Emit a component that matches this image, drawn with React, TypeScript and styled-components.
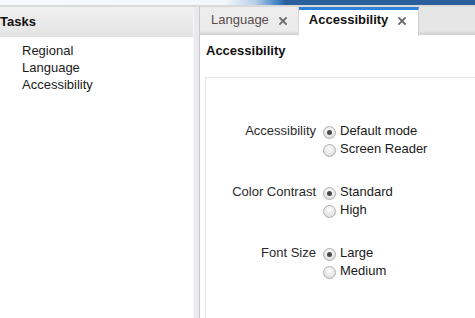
import React from "react";
import styled, { createGlobalStyle } from "styled-components";

const Global = createGlobalStyle`
  html, body { margin: 0; padding: 0; background: #fff; }
  body { font-family: "Liberation Sans", Arial, sans-serif; font-size: 13px; color: #222; }
  #root { width: 475px; height: 318px; overflow: hidden; }
`;

const Page = styled.div`
  width: 475px;
  height: 318px;
  display: flex;
  flex-direction: column;
  overflow: hidden;
`;

const TopStrip = styled.div`
  height: 5px;
  flex: none;
  background: linear-gradient(to right, #f7f9fc 0px, #f4f7fb 225px, #b9d0ea 255px, #3f7fc4 278px, #2a5f9c 285px, #2a5f9c 100%);
  border-bottom: 2px solid #d9d9d9;
`;

const Main = styled.div`
  flex: 1;
  display: flex;
  min-height: 0;
`;

const Sidebar = styled.div`
  width: 193px;
  flex: none;
  display: flex;
  flex-direction: column;
  background: #fff;
`;

const SidebarHeader = styled.div`
  height: 30px;
  display: flex;
  align-items: center;
  padding-bottom: 2px;
  box-sizing: border-box;
  font-weight: bold;
  color: #111;
  background: linear-gradient(to bottom, #f1f1f1, #e3e3e3);
`;

const TaskList = styled.ul`
  list-style: none;
  margin: 0;
  padding: 5px 0 0 22px;
`;

const TaskItem = styled.li`
  line-height: 17px;
  color: #1a1a1a;
`;

const Splitter = styled.div`
  flex: none;
  width: 7px;
  box-sizing: border-box;
  background: #e8eaef;
  border-left: 1px solid #f6f7f9;
  border-right: 1px solid #c9c9c9;
`;

const Workspace = styled.div`
  flex: 1;
  display: flex;
  flex-direction: column;
  min-width: 0;
`;

const TabBar = styled.div`
  height: 28px;
  flex: none;
  display: flex;
  background: linear-gradient(to bottom, #e6e6e6 0, #e6e6e6 24px, #dadada 26px, #cfcfcf 28px);
`;

const Tab = styled.div<{ $active?: boolean }>`
  display: flex;
  align-items: flex-start;
  gap: 10px;
  box-sizing: border-box;
  height: ${(p) => (p.$active ? "29px" : "28px")};
  font-weight: ${(p) => (p.$active ? "bold" : "normal")};
  color: ${(p) => (p.$active ? "#111" : "#5a4d4d")};
  background: ${(p) =>
    p.$active
      ? "#fff"
      : "linear-gradient(to bottom, #ededed 0, #ebebeb 24px, #dcdcdc 26px, #d0d0d0 28px)"};
  border-top: ${(p) => (p.$active ? "3px solid #2f80d8" : "none")};
  border-right: 1px solid ${(p) => (p.$active ? "#cfcfcf" : "#d6d6d6")};
  padding: ${(p) => (p.$active ? "2px 12px 0 10px" : "5px 11px 0 11px")};
  line-height: 16px;
  z-index: 1;
`;

const CloseIcon = styled.svg`
  width: 8px;
  height: 8px;
  margin-top: 5px;
  flex: none;
`;

const Content = styled.div`
  flex: 1;
  background: #fff;
  padding: 8px 0 0 5px;
  display: flex;
  flex-direction: column;
`;

const Heading = styled.div`
  font-weight: bold;
  color: #111;
  line-height: 16px;
  margin-left: 1px;
`;

const FormBox = styled.div`
  margin-top: 18px;
  border-top: 1px solid #e6e6e6;
  border-left: 1px solid #e6e6e6;
  flex: 1;
  padding-top: 44px;
  display: flex;
  flex-direction: column;
  gap: 25px;
`;

const Group = styled.div`
  display: grid;
  grid-template-columns: 110px auto;
  column-gap: 7px;
`;

const Label = styled.div`
  text-align: right;
  line-height: 18px;
  color: #2a2a2a;
`;

const Options = styled.div`
  display: flex;
  flex-direction: column;
`;

const Option = styled.label`
  display: flex;
  align-items: center;
  gap: 4px;
  line-height: 18px;
  color: #1a1a1a;
`;

const Radio = styled.span<{ $checked?: boolean }>`
  width: 13px;
  height: 13px;
  margin-top: 3px;
  box-sizing: border-box;
  border-radius: 50%;
  border: 1px solid #b0b0b0;
  background: radial-gradient(circle at 50% 35%, #fdfdfd 0%, #e6e6e6 60%, #d4d4d4 100%);
  display: flex;
  align-items: center;
  justify-content: center;
  flex: none;
  &::after {
    content: "";
    width: 5px;
    height: 5px;
    border-radius: 50%;
    background: ${(p) => (p.$checked ? "#4a4a4a" : "transparent")};
  }
`;

const X = () => (
  <CloseIcon viewBox="0 0 8 8">
    <path d="M1 1 L7 7 M7 1 L1 7" stroke="#6b6b6b" strokeWidth="1.8" strokeLinecap="square" />
  </CloseIcon>
);

const groups = [
  { label: "Accessibility", options: ["Default mode", "Screen Reader"] },
  { label: "Color Contrast", options: ["Standard", "High"] },
  { label: "Font Size", options: ["Large", "Medium"] },
];

export default function App() {
  return (
    <Page>
      <Global />
      <TopStrip />
      <Main>
        <Sidebar>
          <SidebarHeader>Tasks</SidebarHeader>
          <TaskList>
            <TaskItem>Regional</TaskItem>
            <TaskItem>Language</TaskItem>
            <TaskItem>Accessibility</TaskItem>
          </TaskList>
        </Sidebar>
        <Splitter />
        <Workspace>
          <TabBar>
            <Tab>
              Language
              <X />
            </Tab>
            <Tab $active>
              Accessibility
              <X />
            </Tab>
          </TabBar>
          <Content>
            <Heading>Accessibility</Heading>
            <FormBox>
              {groups.map((g) => (
                <Group key={g.label}>
                  <Label>{g.label}</Label>
                  <Options>
                    {g.options.map((o, i) => (
                      <Option key={o}>
                        <Radio $checked={i === 0} />
                        {o}
                      </Option>
                    ))}
                  </Options>
                </Group>
              ))}
            </FormBox>
          </Content>
        </Workspace>
      </Main>
    </Page>
  );
}
